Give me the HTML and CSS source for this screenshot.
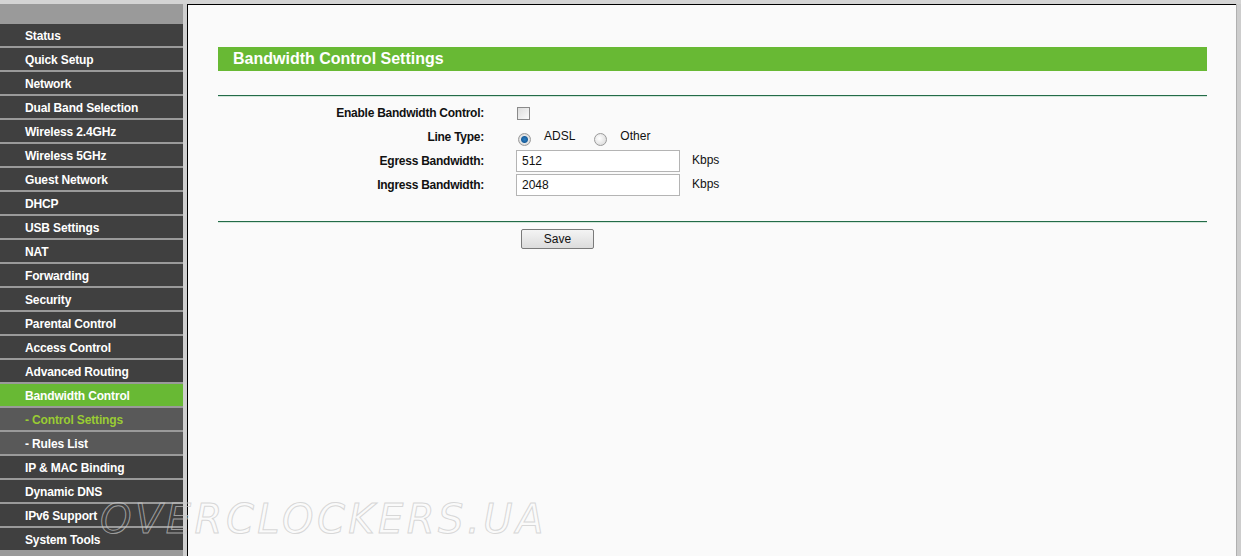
FILE: index.html
```html
<!DOCTYPE html>
<html lang="en">
<head>
    <meta charset="UTF-8">
    <title>Bandwidth Control Settings</title>
    <link rel="stylesheet" href="styles.css">
</head>
<body>

    <div class="frame">
        <!-- Left menu -->
        <div class="menu">
            <div class="menu-head"></div>
            <a class="item">Status</a>
            <a class="item">Quick Setup</a>
            <a class="item">Network</a>
            <a class="item">Dual Band Selection</a>
            <a class="item">Wireless 2.4GHz</a>
            <a class="item">Wireless 5GHz</a>
            <a class="item">Guest Network</a>
            <a class="item">DHCP</a>
            <a class="item">USB Settings</a>
            <a class="item">NAT</a>
            <a class="item">Forwarding</a>
            <a class="item">Security</a>
            <a class="item">Parental Control</a>
            <a class="item">Access Control</a>
            <a class="item">Advanced Routing</a>
            <a class="item active">Bandwidth Control</a>
            <a class="item sub current">- Control Settings</a>
            <a class="item sub">- Rules List</a>
            <a class="item">IP &amp; MAC Binding</a>
            <a class="item">Dynamic DNS</a>
            <a class="item">IPv6 Support</a>
            <a class="item">System Tools</a>
        </div>
        <div class="menu-gap"></div>

        <!-- Main content -->
        <div class="main">
            <div class="title-bar">Bandwidth Control Settings</div>
            <div class="rule"></div>

            <div class="form">
                <div class="label">Enable Bandwidth Control:</div>
                <div class="field"><span class="check"></span></div>

                <div class="label">Line Type:</div>
                <div class="field">
                    <span class="radio on"></span><span class="opt">ADSL</span>
                    <span class="radio"></span><span class="opt">Other</span>
                </div>

                <div class="label">Egress Bandwidth:</div>
                <div class="field"><span class="input">512</span><span class="unit">Kbps</span></div>

                <div class="label">Ingress Bandwidth:</div>
                <div class="field"><span class="input">2048</span><span class="unit">Kbps</span></div>
            </div>

            <div class="rule rule-bottom"></div>
            <div class="actions">
                <button class="btn">Save</button>
            </div>
        </div>
        <div class="scroll-edge"></div>
    </div>

    <div class="watermark">OVERCLOCKERS.UA</div>

</body>
</html>
```

FILE: styles.css
```css
body {
    margin: 0;
    padding: 0;
    height: 556px;
    overflow: hidden;
    background-color: #d4d4d4;
    font-family: 'Liberation Sans', Arial, sans-serif;
    font-size: 12px;
    position: relative;
}

.frame {
    display: flex;
    height: 552px;
    margin-top: 4px;
}

/* Menu */
.menu {
    width: 183px;
    background-color: #9a9a9a;
    display: flex;
    flex-direction: column;
    gap: 2px;
}

.menu-head {
    height: 18px;
}

.item {
    display: block;
    height: 22px;
    line-height: 24px;
    padding-left: 25px;
    background-color: #404040;
    color: white;
    font-weight: bold;
    font-size: 12px;
    letter-spacing: -0.15px;
    white-space: nowrap;
    overflow: hidden;
}

.item.active {
    background-color: #68b934;
}

.item.sub {
    background-color: #595959;
}

.item.current {
    color: #99cc33;
}

.menu-gap {
    width: 4px;
    background-color: #cfcfcf;
}

/* Main area */
.main {
    flex: 1;
    background-color: #fafafa;
    border-left: 1px solid black;
    border-top: 1px solid black;
    padding: 42px 29px 0 30px;
}

.title-bar {
    height: 24px;
    line-height: 23px;
    background-color: #68b934;
    color: white;
    font-weight: bold;
    font-size: 16px;
    padding-left: 15px;
}

.rule {
    margin-top: 24px;
    height: 1px;
    background-color: #236b48;
    border-bottom: 1px solid #d3e6da;
}

.rule-bottom {
    margin-top: 24px;
}

.form {
    display: grid;
    grid-template-columns: 266px 1fr;
    column-gap: 32px;
    grid-auto-rows: 24px;
    margin-top: 4px;
}

.label {
    text-align: right;
    font-weight: bold;
    line-height: 24px;
    letter-spacing: -0.25px;
    color: #111;
}

.field {
    display: flex;
    align-items: center;
}

.check {
    width: 11px;
    height: 11px;
    border: 1px solid #8a8a8a;
    background: linear-gradient(135deg, #dcdcdc, #fbfbfb);
    margin-left: 1px;
}

.radio {
    width: 11px;
    height: 11px;
    border: 1px solid #9a9a9a;
    border-radius: 50%;
    background: radial-gradient(circle at 40% 40%, #fff, #d4d4d4);
    margin-left: 2px;
    margin-top: 4px;
}

.radio.on {
    background: radial-gradient(circle, #2a7fc4 0, #1b5f9c 3px, #e8e8e8 4px, #d4d4d4 6px);
}

.opt {
    margin-left: 13px;
    margin-right: 17px;
    color: #111;
    margin-top: -2px;
}

.input {
    width: 157px;
    height: 20px;
    line-height: 21px;
    border: 1px solid #b4b4b4;
    background-color: white;
    padding-left: 5px;
    font-size: 12px;
    color: #111;
}

.unit {
    margin-left: 12px;
    margin-top: -3px;
    color: #111;
}

.actions {
    padding-left: 303px;
    padding-top: 6px;
}

.btn {
    width: 73px;
    height: 20px;
    padding: 0;
    border: 1px solid #7a7a7a;
    border-radius: 2px;
    background: linear-gradient(#f4f4f4, #dcdcdc);
    font-family: 'Liberation Sans', Arial, sans-serif;
    font-size: 12px;
    color: #111;
}

.scroll-edge {
    width: 4px;
    background-color: #cdcdcd;
    border-left: 1px solid #b0b0b0;
}

/* Site watermark over the screenshot */
.watermark {
    position: absolute;
    left: 100px;
    top: 496px;
    font-family: 'DejaVu Sans', sans-serif;
    font-style: italic;
    font-size: 40px;
    letter-spacing: 3.5px;
    color: transparent;
    -webkit-text-stroke: 1px rgba(200, 200, 200, 0.7);
    white-space: nowrap;
}
```
